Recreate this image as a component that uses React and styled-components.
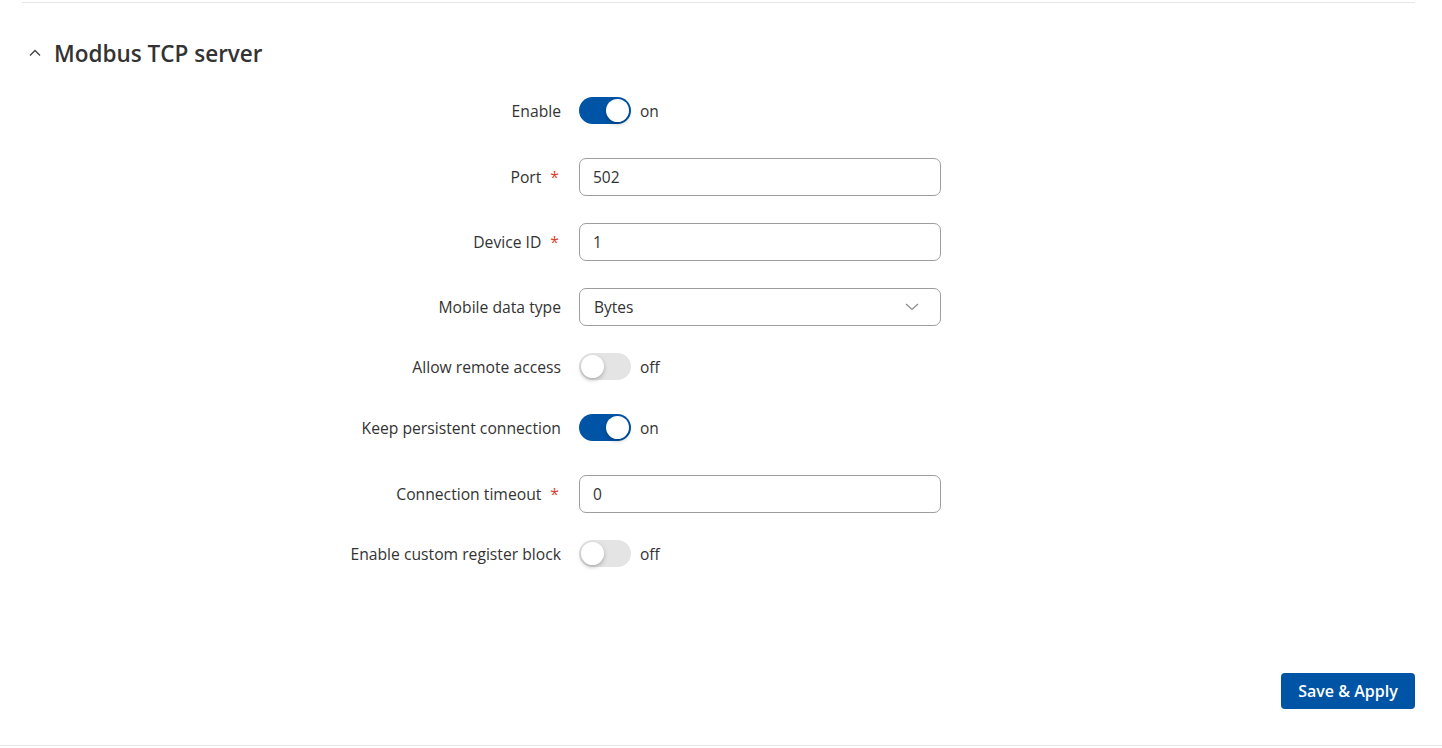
import React, { useState } from 'react'
import styled, { createGlobalStyle } from 'styled-components'

const GlobalStyle = createGlobalStyle`
  body {
    margin: 0;
    background: #fff;
    font-family: 'Open Sans', 'Noto Sans', sans-serif;
    color: #333;
  }
`

function Toggle({ on, onChange }) {
  return (
    <ToggleWrap>
      <Track $on={on} onClick={() => onChange(!on)}>
        <Knob $on={on} />
      </Track>
      <ToggleText>{on ? 'on' : 'off'}</ToggleText>
    </ToggleWrap>
  )
}

function App() {
  const [enable, setEnable] = useState(true)
  const [remote, setRemote] = useState(false)
  const [persistent, setPersistent] = useState(true)
  const [custom, setCustom] = useState(false)

  return (
    <Page>
      <GlobalStyle />
      <Section>
        <Header>
          <svg width="14" height="10" viewBox="0 0 14 10">
            <path d="M2 7.5 L7 2.5 L12 7.5" fill="none" stroke="#444" strokeWidth="1.4" />
          </svg>
          <Title>Modbus TCP server</Title>
        </Header>

        <Form>
          <Row $toggle>
            <Label>Enable</Label>
            <Toggle on={enable} onChange={setEnable} />
          </Row>
          <Row>
            <Label>Port<Req>*</Req></Label>
            <Input defaultValue="502" />
          </Row>
          <Row>
            <Label>Device ID<Req>*</Req></Label>
            <Input defaultValue="1" />
          </Row>
          <Row>
            <Label>Mobile data type</Label>
            <Select>
              <span>Bytes</span>
              <svg width="14" height="8" viewBox="0 0 14 8">
                <path d="M1 1 L7 6.5 L13 1" fill="none" stroke="#8a8a8a" strokeWidth="1.2" />
              </svg>
            </Select>
          </Row>
          <Row $toggle>
            <Label>Allow remote access</Label>
            <Toggle on={remote} onChange={setRemote} />
          </Row>
          <Row $toggle>
            <Label>Keep persistent connection</Label>
            <Toggle on={persistent} onChange={setPersistent} />
          </Row>
          <Row>
            <Label>Connection timeout<Req>*</Req></Label>
            <Input defaultValue="0" />
          </Row>
          <Row $toggle>
            <Label>Enable custom register block</Label>
            <Toggle on={custom} onChange={setCustom} />
          </Row>
        </Form>

        <Actions>
          <SaveButton>Save &amp; Apply</SaveButton>
        </Actions>
      </Section>
      <Footer />
    </Page>
  )
}

export default App

const Page = styled.div`
  width: 100%;
  height: 748px;
  display: flex;
  flex-direction: column;
`

const Section = styled.div`
  margin: 2px 27px 0 22px;
  border-top: 1px solid #e6e6e6;
  flex: 1;
  display: flex;
  flex-direction: column;
`

const Header = styled.div`
  display: flex;
  align-items: center;
  gap: 12px;
  padding: 34px 0 0 6px;
  height: 32px;
`

const Title = styled.h2`
  margin: 0;
  font-size: 22.5px;
  font-weight: 600;
  color: #333;
`

const Form = styled.div`
  display: flex;
  flex-direction: column;
  gap: 27px;
  margin-top: 28px;
`

const Row = styled.div`
  display: grid;
  grid-template-columns: 539px 362px;
  column-gap: 18px;
  align-items: center;
  padding-bottom: ${({ $toggle }) => ($toggle ? '7px' : '0')};
`

const Label = styled.label`
  text-align: right;
  font-size: 15.7px;
  line-height: 20px;
  color: #333;
`

const Req = styled.span`
  color: #e0402a;
  margin-left: 9px;
  margin-right: 2px;
`

const Input = styled.input`
  box-sizing: border-box;
  height: 38px;
  width: 362px;
  border: 1px solid #9e9e9e;
  border-radius: 7px;
  padding: 0 13px;
  font-family: 'Open Sans', sans-serif;
  font-size: 15.5px;
  color: #333;
  outline: none;
`

const Select = styled.div`
  box-sizing: border-box;
  height: 38px;
  width: 362px;
  border: 1px solid #9e9e9e;
  border-radius: 7px;
  padding: 0 21px 0 14px;
  display: flex;
  align-items: center;
  justify-content: space-between;
  font-size: 15.5px;
  color: #333;
`

const ToggleWrap = styled.div`
  display: flex;
  align-items: center;
  gap: 9px;
`

const Track = styled.div`
  position: relative;
  width: 52px;
  height: 27px;
  border-radius: 14px;
  background: ${({ $on }) => ($on ? '#0054a6' : '#e4e4e4')};
  cursor: pointer;
`

const Knob = styled.div`
  position: absolute;
  top: 2px;
  left: ${({ $on }) => ($on ? '27px' : '2px')};
  width: 23px;
  height: 23px;
  border-radius: 50%;
  background: #fff;
  box-shadow: 0 2px 4px rgba(0, 0, 0, 0.25);
`

const ToggleText = styled.span`
  font-size: 15.5px;
  color: #333;
`

const Actions = styled.div`
  display: flex;
  justify-content: flex-end;
  margin-top: auto;
  padding-bottom: 36px;
`

const SaveButton = styled.button`
  height: 36px;
  width: 134px;
  border: none;
  border-radius: 4px;
  background: #0054a6;
  color: #fff;
  font-family: 'Open Sans', sans-serif;
  font-size: 16px;
  font-weight: 600;
  cursor: pointer;
`

const Footer = styled.div`
  height: 2px;
  border-top: 1px solid #e1e4ea;
`
